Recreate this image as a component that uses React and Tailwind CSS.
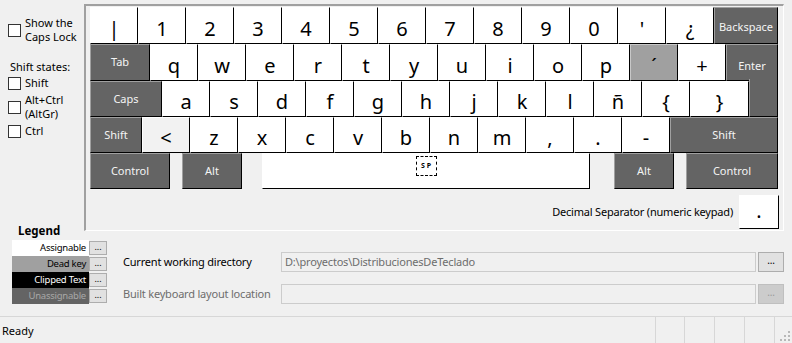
import React from 'react';

const KIND = {
  key: 'bg-white text-black border-l-white border-t-white text-[20px]',
  mod: 'bg-[#646464] text-[#f4f4f4] border-l-[#a0a0a0] border-t-[#a0a0a0] text-[11px]',
  dead: 'bg-[#a0a0a0] text-black border-l-[#c8c8c8] border-t-[#c8c8c8] text-[20px]',
  pale: 'bg-[#f2f2f2] text-black border-l-white border-t-white text-[20px]',
};

const Key = ({ label, w = 48, kind = 'key', className = '', children }) => (
  <div
    className={`flex justify-center border-l border-t border-r border-b border-r-black border-b-black shrink-0 ${KIND[kind]} ${className}`}
    style={{ width: w }}
  >
    {children ?? label}
  </div>
);

const row1 = ['|', '1', '2', '3', '4', '5', '6', '7', '8', '9', '0', "'", '¿'];
const row2 = ['q', 'w', 'e', 'r', 't', 'y', 'u', 'i', 'o', 'p'];
const row3 = ['a', 's', 'd', 'f', 'g', 'h', 'j', 'k', 'l', 'ñ', '{'];
const row4 = ['z', 'x', 'c', 'v', 'b', 'n', 'm', ',', '.', '-'];

const CheckBox = () => (
  <span className="w-[13px] h-[13px] border border-[#333] bg-white shrink-0" />
);

const legend = [
  { label: 'Assignable', cls: 'bg-white text-black' },
  { label: 'Dead key', cls: 'bg-[#a0a0a0] text-black' },
  { label: 'Clipped Text', cls: 'bg-black text-white' },
  { label: 'Unassignable', cls: 'bg-[#646464] text-[#a8a8a8]' },
];

const DotsButton = ({ className = '', disabled }) => (
  <button
    className={`flex items-center justify-center border leading-none ${
      disabled ? 'bg-[#cccccc] border-[#bfbfbf] text-[#9a9a9a]' : 'bg-[#e1e1e1] border-[#adadad] text-black'
    } ${className}`}
  >
    ...
  </button>
);

export default function App() {
  const keyText = 'items-center pt-[6px]';
  const modText = 'items-center';

  return (
    <div
      className="w-[792px] h-[343px] bg-[#f0f0f0] flex flex-col overflow-hidden text-black select-none"
      style={{ fontFamily: '"Noto Sans", "Open Sans", sans-serif' }}
    >
      <div className="flex h-[231px] shrink-0">
        {/* Options sidebar */}
        <aside className="w-[84px] h-[231px] flex flex-col pl-2 pt-[16px] text-[11px]">
          <label className="flex items-center gap-[4px] h-[28px] leading-[14px]">
            <CheckBox />
            <span>Show the<br />Caps Lock</span>
          </label>
          <div className="mt-[16px] h-[14px] leading-[14px] pl-[2px]">Shift states:</div>
          <label className="mt-[2px] flex items-center gap-[4px] h-[14px] leading-[14px]">
            <CheckBox />
            <span>Shift</span>
          </label>
          <label className="mt-[3px] flex items-center gap-[4px] h-[28px] leading-[14px]">
            <CheckBox />
            <span>Alt+Ctrl<br />(AltGr)</span>
          </label>
          <label className="mt-[3px] flex items-center gap-[4px] h-[14px] leading-[14px]">
            <CheckBox />
            <span>Ctrl</span>
          </label>
          <div className="mt-auto -mb-[7px] h-[14px] leading-[14px] pl-[10px] font-bold text-[11.5px]">Legend</div>
        </aside>

        {/* Keyboard panel */}
        <div className="mt-1 w-[700px] h-[227px] border-l-2 border-t-2 border-r border-b border-l-[#a0a0a0] border-t-[#a0a0a0] border-r-white border-b-white pl-[4px] pt-[1px] flex flex-col">
          <div className="flex h-[37px]">
            {row1.map((k) => (
              <Key key={k} label={k} className={keyText} />
            ))}
            <Key label="Backspace" w={64} kind="mod" className="items-center pt-[4px]" />
          </div>
          <div className="flex h-[37px]">
            <Key label="Tab" w={60} kind="mod" className={modText} />
            {row2.map((k) => (
              <Key key={k} label={k} className={keyText} />
            ))}
            <Key label="´" kind="dead" className={keyText} />
            <Key label="+" className={keyText} />
            <Key label="Enter" w={52} kind="mod" className="items-center pt-[8px]" />
          </div>
          <div className="flex h-[36px]">
            <Key label="Caps" w={72} kind="mod" className={modText} />
            {row3.map((k) => (
              <Key key={k} label={k} className={keyText} />
            ))}
            <Key label="}" w={59} className={keyText} />
            <Key w={29} kind="mod" className="-mt-[2px] h-[38px] border-t-0">{''}</Key>
          </div>
          <div className="flex h-[36px]">
            <Key label="Shift" w={52} kind="mod" className={modText} />
            <Key label="<" kind="pale" className={keyText} />
            {row4.map((k) => (
              <Key key={k} label={k} className={keyText} />
            ))}
            <Key label="Shift" w={108} kind="mod" className={modText} />
          </div>
          <div className="flex h-[36px]">
            <Key label="Control" w={80} kind="mod" className={modText} />
            <Key label="Alt" w={60} kind="mod" className={`${modText} ml-[12px]`} />
            <Key w={328} className="items-start pt-[2px] ml-[20px]">
              <span className="w-[21px] h-[20px] border border-dashed border-black flex items-center justify-center text-[7px] font-bold tracking-[2px] pl-[2px]">
                SP
              </span>
            </Key>
            <Key label="Alt" w={60} kind="mod" className={`${modText} ml-[24px]`} />
            <Key label="Control" w={92} kind="mod" className={`${modText} ml-[12px]`} />
          </div>
          <div className="flex justify-end items-center gap-[6px] mt-[6px] pr-[4px]">
            <span className="text-[11px] tracking-[-0.2px]">Decimal Separator (numeric keypad)</span>
            <Key label="." w={40} className="h-[34px] items-end pb-[2px] text-[14px]" />
          </div>
        </div>
      </div>

      {/* Legend + paths */}
      <div className="flex h-[85px] shrink-0 pt-[9px] pl-[12px]">
        <div className="flex flex-col">
          {legend.map((l) => (
            <div key={l.label} className="flex h-[16px] items-center">
              <div className={`w-[77px] h-[16px] flex items-center justify-end pr-[3px] text-[9.5px] tracking-tight ${l.cls}`}>
                {l.label}
              </div>
              <DotsButton className="w-[18px] h-[14px] text-[9px] pb-[3px]" />
            </div>
          ))}
        </div>
        <div className="ml-[16px] flex flex-col gap-[12px] pt-[12px] text-[11px] tracking-[-0.2px]">
          <div className="flex items-center h-[20px]">
            <span className="w-[158px] whitespace-nowrap">Current working directory</span>
            <div className="w-[475px] h-[20px] border border-[#cccccc] bg-[#f0f0f0] flex items-center pl-[3px] text-[#6d6d6d]">
              {'D:\\proyectos\\DistribucionesDeTeclado'}
            </div>
            <DotsButton className="ml-[2px] w-[26px] h-[20px] text-[10px] pb-[4px]" />
          </div>
          <div className="flex items-center h-[20px]">
            <span className="w-[158px] whitespace-nowrap text-[#6d6d6d]">Built keyboard layout location</span>
            <div className="w-[475px] h-[20px] border border-[#cccccc] bg-[#f0f0f0]" />
            <DotsButton disabled className="ml-[2px] w-[26px] h-[20px] text-[10px] pb-[4px]" />
          </div>
        </div>
      </div>

      {/* Status bar */}
      <div className="flex h-[27px] border-t border-[#d7d7d7] text-[11px]">
        <div className="w-[655px] flex items-center pl-[2px] pt-[2px]">Ready</div>
        <div className="w-[29px] border-l border-[#d7d7d7]" />
        <div className="w-[30px] border-l border-[#d7d7d7]" />
        <div className="w-[30px] border-l border-[#d7d7d7]" />
        <div className="w-[30px] border-l border-[#d7d7d7]" />
        <div className="flex-1 border-l border-[#d7d7d7] flex items-end justify-end pr-[2px] pb-[2px]">
          <svg width="10" height="10" viewBox="0 0 10 10">
            {[[8, 0], [8, 4], [4, 4], [8, 8], [4, 8], [0, 8]].map(([x, y]) => (
              <rect key={`${x}-${y}`} x={x} y={y} width="2" height="2" fill="#b8b8b8" />
            ))}
          </svg>
        </div>
      </div>
    </div>
  );
}
